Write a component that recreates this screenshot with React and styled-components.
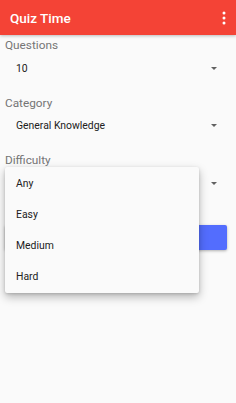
import React from "react";
import styled, { createGlobalStyle } from "styled-components";

const Global = createGlobalStyle`
  html, body, #root { margin: 0; padding: 0; height: 100%; }
  body { background: #fafafa; font-family: Roboto, "Noto Sans", Arial, sans-serif; }
`;

const Page = styled.div`
  position: relative;
  height: 100%;
  background: #fafafa;
  overflow: hidden;
`;

const AppBar = styled.header`
  height: 35px;
  background: #f44336;
  display: flex;
  align-items: center;
  justify-content: space-between;
  padding: 0 10px 0 10px;
  box-shadow: 0 1px 3px rgba(0, 0, 0, 0.25);
  position: relative;
  z-index: 1;
`;

const Title = styled.h1`
  margin: 0;
  color: #fff;
  font-size: 13.5px;
  font-weight: 500;
`;

const Content = styled.main`
  padding: 2px 9px 0 5px;
`;

const Field = styled.section`
  margin-bottom: 11.5px;
`;

const Label = styled.div`
  height: 16px;
  line-height: 16px;
  font-size: 11.8px;
  color: #757575;
`;

const SelectRow = styled.div`
  height: 30px;
  display: flex;
  align-items: center;
  justify-content: space-between;
  padding: 0 10px 0 11px;
  font-size: 10.4px;
  color: #212121;
`;

const Arrow = styled.span`
  width: 0;
  height: 0;
  border-left: 3px solid transparent;
  border-right: 3px solid transparent;
  border-top: 3px solid #616161;
`;

const Button = styled.button`
  display: block;
  width: 100%;
  height: 25px;
  margin-top: 27px;
  border: none;
  border-radius: 2px;
  background: #536dfe;
  color: #fff;
  font-family: inherit;
  font-size: 10px;
  font-weight: 500;
  box-shadow: 0 1px 3px rgba(0, 0, 0, 0.3);
`;

const Menu = styled.ul`
  position: absolute;
  top: 167px;
  left: 5px;
  width: 194px;
  margin: 0;
  padding: 1px 0;
  list-style: none;
  background: #fafafa;
  box-shadow: 0 4px 10px rgba(0, 0, 0, 0.28), 0 1px 3px rgba(0, 0, 0, 0.15);
  border-radius: 2px;
  z-index: 2;
`;

const MenuItem = styled.li`
  height: 31px;
  display: flex;
  align-items: center;
  padding-left: 11px;
  font-size: 10.4px;
  color: #212121;
`;

const Kebab = () => (
  <svg width="4" height="14" viewBox="0 0 4 14">
    <circle cx="2" cy="2" r="1.5" fill="#fff" />
    <circle cx="2" cy="7" r="1.5" fill="#fff" />
    <circle cx="2" cy="12" r="1.5" fill="#fff" />
  </svg>
);

const fields = [
  { label: "Questions", value: "10" },
  { label: "Category", value: "General Knowledge" },
  { label: "Difficulty", value: "Any" },
];

export default function App() {
  return (
    <Page>
      <Global />
      <AppBar>
        <Title>Quiz Time</Title>
        <Kebab />
      </AppBar>
      <Content>
        {fields.map((f) => (
          <Field key={f.label}>
            <Label>{f.label}</Label>
            <SelectRow>
              <span>{f.value}</span>
              <Arrow />
            </SelectRow>
          </Field>
        ))}
        <Button>START</Button>
      </Content>
      <Menu>
        {["Any", "Easy", "Medium", "Hard"].map((o) => (
          <MenuItem key={o}>{o}</MenuItem>
        ))}
      </Menu>
    </Page>
  );
}
